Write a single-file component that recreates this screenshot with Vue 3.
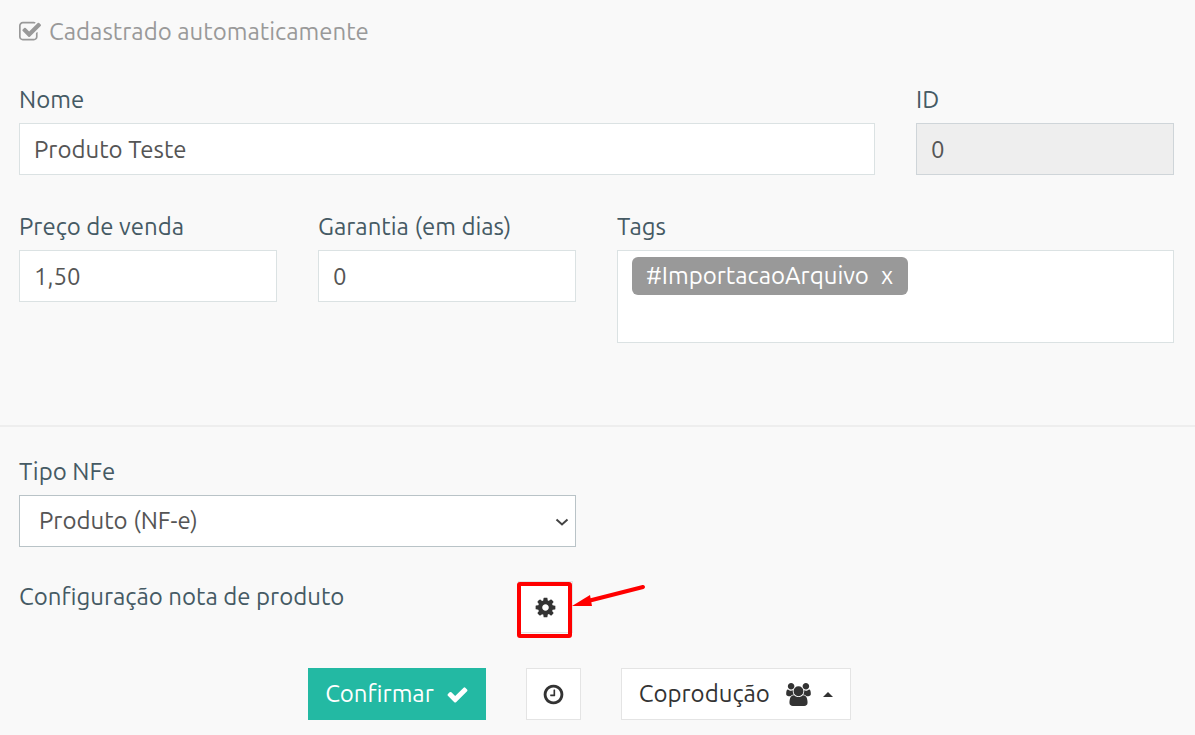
<script setup>
import { ref } from 'vue'

const autoRegistered = ref(true)
const nome = ref('Produto Teste')
const id = ref('0')
const preco = ref('1,50')
const garantia = ref('0')
const tags = ref(['#ImportacaoArquivo'])
const tipo = ref('nfe')

function removeTag(tag) {
  tags.value = tags.value.filter((t) => t !== tag)
}
</script>

<template>
  <form class="page" @submit.prevent>
    <section class="grid">
      <label class="auto">
        <input v-model="autoRegistered" type="checkbox" disabled />
        <svg class="icon-tick" viewBox="64 0 1664 1792" aria-hidden="true">
          <path d="M1472 930v318q0 119-84.5 203.5t-203.5 84.5h-832q-119 0-203.5-84.5t-84.5-203.5v-832q0-119 84.5-203.5t203.5-84.5h832q63 0 117 25 15 7 18 23 3 17-9 29l-49 49q-10 10-23 10-3 0-9-2-23-6-45-6h-832q-66 0-113 47t-47 113v832q0 66 47 113t113 47h832q66 0 113-47t47-113v-254q0-13 9-22l64-64q10-10 23-10 6 0 12 3 20 8 20 29zm231-489l-814 814q-24 24-57 24t-57-24l-430-430q-24-24-24-57t24-57l110-110q24-24 57-24t57 24l263 263 647-647q24-24 57-24t57 24l110 110q24 24 24 57t-24 57z" />
        </svg>
        <span>Cadastrado automaticamente</span>
      </label>

      <div class="field span3">
        <label for="nome">Nome</label>
        <input id="nome" v-model="nome" class="control" type="text" />
      </div>
      <div class="field">
        <label for="id">ID</label>
        <input id="id" v-model="id" class="control" type="text" disabled />
      </div>

      <div class="field">
        <label for="preco">Preço de venda</label>
        <input id="preco" v-model="preco" class="control" type="text" />
      </div>
      <div class="field">
        <label for="garantia">Garantia (em dias)</label>
        <input id="garantia" v-model="garantia" class="control" type="text" />
      </div>
      <div class="field span2">
        <label for="tags">Tags</label>
        <div class="tagbox">
          <span v-for="tag in tags" :key="tag" class="tag">
            {{ tag }}
            <button type="button" @click="removeTag(tag)">x</button>
          </span>
          <input id="tags" class="tag-input" type="text" />
        </div>
      </div>
    </section>

    <hr />

    <section class="grid">
      <div class="field span2">
        <label for="tipo">Tipo NFe</label>
        <div class="select-wrap">
          <select id="tipo" v-model="tipo" class="control">
            <option value="nfe">Produto (NF-e)</option>
          </select>
          <svg class="chevron" viewBox="0 0 14 8" aria-hidden="true">
            <path d="M1.500 1.500L7 6.500L12.500 1.500" />
          </svg>
        </div>
      </div>
      <div class="config span2">
        <span id="config-label">Configuração nota de produto</span>
        <div class="config-action">
          <button type="button" class="btn square" aria-labelledby="config-label">
            <svg class="icon" viewBox="0 0 1792 1792" aria-hidden="true">
              <path d="M1152 896q0-106-75-181t-181-75-181 75-75 181 75 181 181 75 181-75 75-181zm512-109v222q0 12-8 23t-20 13l-185 28q-19 54-39 91 35 50 107 138 10 12 10 25t-9 23q-27 37-99 108t-94 71q-12 0-26-9l-138-108q-44 23-91 38-16 136-29 186-7 28-36 28h-222q-14 0-24.5-8.5t-11.5-21.5l-28-184q-49-16-90-37l-141 107q-10 9-25 9-14 0-25-11-126-114-165-168-7-10-7-23 0-12 8-23 15-21 51-66.5t54-70.5q-27-50-41-99l-183-27q-13-2-21-12.5t-8-23.5v-222q0-12 8-23t19-13l186-28q14-46 39-92-40-57-107-138-10-12-10-24 0-10 9-23 26-36 98.5-107.5t94.5-71.5q13 0 26 10l138 107q44-23 91-38 16-136 29-186 7-28 36-28h222q14 0 24.5 8.5t11.5 21.5l28 184q49 16 90 37l142-107q9-9 24-9 13 0 25 10 129 119 165 170 7 8 7 22 0 12-8 23-15 21-51 66.5t-54 70.5q26 50 41 98l183 28q13 2 21 12.5t8 23.5z" />
            </svg>
          </button>
          <svg class="callout" viewBox="0 0 132 58" aria-hidden="true">
            <rect x="3" y="3" width="51" height="52" rx="1" />
            <path d="M127 6L72 20" />
            <polygon points="56,25 74,14 76,25" />
          </svg>
        </div>
      </div>
    </section>

    <footer class="actions">
      <button type="submit" class="btn primary">
        Confirmar
        <svg class="icon" viewBox="0 0 1792 1792" aria-hidden="true">
          <path d="M1671 566q0 40-28 68l-724 724-136 136q-28 28-68 28t-68-28l-136-136-362-362q-28-28-28-68t28-68l136-136q28-28 68-28t68 28l294 295 656-657q28-28 68-28t68 28l136 136q28 28 28 68z" />
        </svg>
      </button>
      <button type="button" class="btn square" aria-label="Histórico">
        <svg class="icon" viewBox="0 0 1792 1792" aria-hidden="true">
          <path d="M1024 544v448q0 14-9 23t-23 9h-320q-14 0-23-9t-9-23v-64q0-14 9-23t23-9h224v-352q0-14 9-23t23-9h64q14 0 23 9t9 23zm416 352q0-148-73-273t-198-198-273-73-273 73-198 198-73 273 73 273 198 198 273 73 273-73 198-198 73-273zm224 0q0 209-103 385.5t-279.5 279.5-385.5 103-385.5-103-279.5-279.5-103-385.5 103-385.5 279.5-279.5 385.5-103 385.5 103 279.5 279.5 103 385.5z" />
        </svg>
      </button>
      <button type="button" class="btn menu">
        <span>Coprodução</span>
        <svg class="icon-users" viewBox="64 0 1920 1792" aria-hidden="true">
          <path d="M657 896q-162 5-265 128h-134q-82 0-138-40.5t-56-118.5q0-353 124-353 6 0 43.5 21t97.5 42.5 119 21.500q67 0 133-23-5 37-5 66 0 139 81 256zm1071 637q0 120-73 189.500t-194 69.500h-874q-121 0-194-69.500t-73-189.500q0-53 3.500-103.500t14-109 26.500-108.500 43-97.500 62-81 85.500-53.500 111.500-20q10 0 43 21.500t73 48 107 48 135 21.500 135-21.500 107-48 73-48 43-21.500q61 0 111.500 20t85.500 53.500 62 81 43 97.500 26.500 108.500 14 109 3.500 103.500zm-1024-1277q0 106-75 181t-181 75-181-75-75-181 75-181 181-75 181 75 75 181zm704 384q0 159-112.500 271.500t-271.500 112.500-271.500-112.500-112.500-271.500 112.500-271.500 271.500-112.500 271.500 112.500 112.500 271.500zm576 225q0 78-56 118.500t-138 40.500h-134q-103-123-265-128 81-117 81-256 0-29-5-66 66 23 133 23 59 0 119-21.500t97.500-42.500 43.500-21q124 0 124 353zm-128-609q0 106-75 181t-181 75-181-75-75-181 75-181 181-75 181 75 75 181z" />
        </svg>
        <svg class="caret" viewBox="0 0 10 5" aria-hidden="true"><path d="M0 5L5 0L10 5z" /></svg>
      </button>
    </footer>
  </form>
</template>

<style>
body {
  background: #f9f9f9;
}
</style>

<style scoped>
.page {
  box-sizing: border-box;
  padding: 16px 0 14px;
  font: 24px/32px Ubuntu, "Noto Sans", sans-serif;
  color: #455a64;
}
.page *,
.page *::before {
  box-sizing: border-box;
}
input,
select,
button {
  font: inherit;
  margin: 0;
}
svg {
  flex: none;
  fill: currentColor;
}
.grid {
  display: grid;
  grid-template-columns: repeat(4, minmax(0, 1fr));
  column-gap: 41px;
  row-gap: 36px;
  padding: 0 21px 0 19px;
}
.span2 {
  grid-column: span 2;
}
.span3 {
  grid-column: span 3;
}
.auto {
  grid-column: 1 / -1;
  position: relative;
  display: flex;
  align-items: center;
  gap: 8px;
  color: #999;
}
.auto input {
  position: absolute;
  width: 21px;
  height: 21px;
  opacity: 0;
}
.icon-tick {
  width: 22px;
  height: 24px;
}
.field {
  display: flex;
  flex-direction: column;
  gap: 7px;
}
.control {
  width: 100%;
  height: 52px;
  padding: 0 14px;
  border: 1px solid #dbe2e3;
  border-radius: 0;
  background: #fff;
  color: #555;
  outline: none;
}
.control:disabled {
  background: #eee;
  border-color: #cfd5d9;
  opacity: 1;
}
.tagbox {
  display: flex;
  flex-wrap: wrap;
  align-items: flex-start;
  min-height: 93px;
  padding: 6px 14px;
  border: 1px solid #dbe2e3;
  background: #fff;
}
.tag {
  display: flex;
  align-items: center;
  gap: 12px;
  height: 38px;
  padding: 0 15px 0 14px;
  border-radius: 6px;
  background: #999;
  color: #fff;
}
.tag button {
  padding: 0;
  border: 0;
  background: none;
  color: inherit;
}
.tag-input {
  flex: 1;
  min-width: 40px;
  height: 38px;
  border: 0;
  background: none;
  outline: none;
}
hr {
  height: 2px;
  margin: 82px 0 29px;
  border: 0;
  background: #eee;
}
.select-wrap {
  position: relative;
}
select.control {
  display: block;
  appearance: none;
  padding: 0 40px 0 19px;
  border-color: #b9c3c7;
}
.chevron {
  position: absolute;
  right: 7px;
  top: 23px;
  width: 14px;
  height: 8px;
  fill: none;
  stroke: #444;
  stroke-width: 2;
  pointer-events: none;
}
.config {
  grid-column: 1 / 3;
  display: flex;
  justify-content: space-between;
  align-items: flex-start;
  padding-right: 3px;
  margin-top: -2px;
}
.config-action {
  position: relative;
}
.callout {
  position: absolute;
  left: -2px;
  top: 0;
  width: 132px;
  height: 58px;
  fill: none;
  stroke: #f00;
  stroke-width: 4;
  stroke-linecap: round;
  pointer-events: none;
}
.callout polygon {
  fill: #f00;
  stroke: none;
}
.btn {
  display: flex;
  align-items: center;
  justify-content: center;
  height: 52px;
  padding: 0 17px;
  border: 1px solid #e4e4e4;
  background: #fff;
  color: #333;
}
.square {
  width: 55px;
  padding: 0;
}
.primary {
  gap: 12px;
  padding: 0 16px;
  border-color: #23b9a3;
  background: #23b9a3;
  color: #fff;
}
.menu {
  gap: 12px;
}
.menu span {
  margin-right: 4px;
}
.icon {
  width: 23px;
  height: 23px;
}
.icon-users {
  width: 25px;
  height: 23px;
}
.caret {
  width: 10px;
  height: 5px;
}
.actions {
  display: flex;
  justify-content: center;
  gap: 40px;
  margin-top: 35px;
  padding-right: 36px;
}
</style>
